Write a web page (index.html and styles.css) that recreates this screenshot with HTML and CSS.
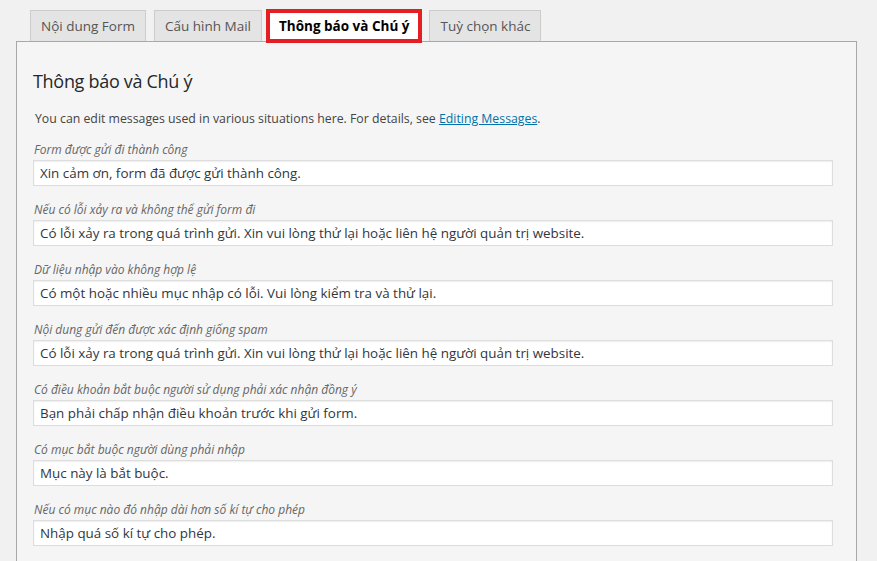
FILE: index.html
```html
<!DOCTYPE html>
<html lang="vi">
<head>
<meta charset="utf-8">
<title>Thông báo và Chú ý</title>
<link rel="stylesheet" href="styles.css">
</head>
<body>
<div class="tabs">
  <div class="tab">Nội dung Form</div>
  <div class="tab">Cấu hình Mail</div>
  <div class="tab tab-active">Thông báo và Chú ý</div>
  <div class="tab">Tuỳ chọn khác</div>
</div>
<div class="panel">
  <h2 class="title">Thông báo và Chú ý</h2>
  <p class="desc">You can edit messages used in various situations here. For details, see <a href="#" class="link">Editing Messages</a>.</p>
  <div class="fields">
    <div class="field">
      <label class="label">Form được gửi đi thành công</label>
      <div class="input">Xin cảm ơn, form đã được gửi thành công.</div>
    </div>
    <div class="field">
      <label class="label">Nếu có lỗi xảy ra và không thể gửi form đi</label>
      <div class="input">Có lỗi xảy ra trong quá trình gửi. Xin vui lòng thử lại hoặc liên hệ người quản trị website.</div>
    </div>
    <div class="field">
      <label class="label">Dữ liệu nhập vào không hợp lệ</label>
      <div class="input">Có một hoặc nhiều mục nhập có lỗi. Vui lòng kiểm tra và thử lại.</div>
    </div>
    <div class="field">
      <label class="label">Nội dung gửi đến được xác định giống spam</label>
      <div class="input">Có lỗi xảy ra trong quá trình gửi. Xin vui lòng thử lại hoặc liên hệ người quản trị website.</div>
    </div>
    <div class="field">
      <label class="label">Có điều khoản bắt buộc người sử dụng phải xác nhận đồng ý</label>
      <div class="input">Bạn phải chấp nhận điều khoản trước khi gửi form.</div>
    </div>
    <div class="field">
      <label class="label">Có mục bắt buộc người dùng phải nhập</label>
      <div class="input">Mục này là bắt buộc.</div>
    </div>
    <div class="field">
      <label class="label">Nếu có mục nào đó nhập dài hơn số kí tự cho phép</label>
      <div class="input">Nhập quá số kí tự cho phép.</div>
    </div>
  </div>
</div>
</body>
</html>
```

FILE: styles.css
```css
html, body {
  margin: 0;
  padding: 0;
}
body {
  background: #f1f1f1;
  font-family: "Open Sans", "Noto Sans", sans-serif;
  color: #444;
  overflow: hidden;
  height: 561px;
}
.tabs {
  display: flex;
  align-items: flex-start;
  gap: 8px;
  height: 31px;
  padding: 10px 0 0 30px;
}
.tab {
  box-sizing: border-box;
  height: 31px;
  padding: 0 10px;
  border: 1px solid #ccc;
  border-bottom: none;
  background: #e4e4e4;
  color: #555;
  font-size: 13.5px;
  line-height: 30px;
  white-space: nowrap;
}
.tab-active {
  position: relative;
  z-index: 1;
  height: 34px;
  margin-top: -1px;
  margin-left: -4px;
  margin-right: -1px;
  border: 4px solid #e31e25;
  background: #fff;
  color: #000;
  font-weight: bold;
  line-height: 26px;
  padding: 0 9px;
}
.panel {
  box-sizing: border-box;
  width: 841px;
  margin-left: 16px;
  border: 1px solid #a8a8a8;
  background: #f5f5f5;
  padding: 0 16px 40px;
  min-height: 540px;
}
.title {
  margin: 26px 0 0;
  font-size: 18px;
  letter-spacing: -0.3px;
  font-weight: normal;
  line-height: 26px;
  color: #23282d;
}
.desc {
  margin: 16px 0 0 2px;
  font-size: 12.3px;
  line-height: 18px;
  color: #444;
}
.link {
  color: #0073aa;
  text-decoration: underline;
}
.fields {
  display: flex;
  flex-direction: column;
  gap: 15px;
  margin-top: 13px;
}
.field {
  display: flex;
  flex-direction: column;
  gap: 1px;
}
.label {
  font-style: italic;
  font-size: 12px;
  line-height: 18px;
  color: #666;
  padding-left: 1px;
}
.input {
  box-sizing: border-box;
  width: 800px;
  height: 26px;
  border: 1px solid #ddd;
  background: #fff;
  box-shadow: inset 0 1px 2px rgba(0,0,0,0.07);
  padding: 0 6px;
  font-size: 13.4px;
  line-height: 24px;
  color: #32373c;
  white-space: nowrap;
  overflow: hidden;
}
```
